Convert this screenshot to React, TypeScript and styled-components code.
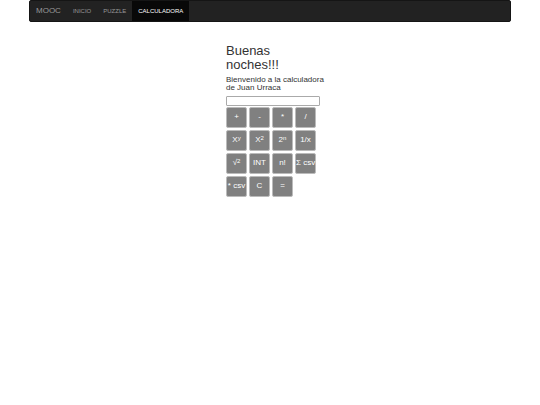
import React from "react";
import styled, { createGlobalStyle } from "styled-components";

const GlobalStyle = createGlobalStyle`
  *, *::before, *::after { box-sizing: border-box; }
  body {
    margin: 0;
    background: #fff;
    color: #333;
    font-family: "Liberation Sans", Arial, sans-serif;
  }
`;

const Navbar = styled.nav`
  display: flex;
  height: 22px;
  margin: 0 29px;
  overflow: hidden;
  background: #222;
  border: 1px solid #151515;
  border-radius: 2px;
`;

const Brand = styled.a`
  display: flex;
  align-items: center;
  padding: 0 6px;
  color: #999;
  font-size: 8px;
  line-height: 10px;
  text-decoration: none;
`;

const Menu = styled.ul`
  display: flex;
  margin: 0;
  padding: 0;
  list-style: none;
`;

const MenuLink = styled.a<{ $active?: boolean }>`
  display: flex;
  align-items: center;
  height: 100%;
  padding: 0 6px;
  background: ${({ $active }) => ($active ? "#080808" : "transparent")};
  color: ${({ $active }) => ($active ? "#fff" : "#999")};
  font-size: 6px;
  line-height: 10px;
  text-decoration: none;
`;

const Calculator = styled.main`
  width: 94px;
  margin: 22px 0 0 calc(50% - 44px);
`;

const Title = styled.h1`
  margin: 0 0 4px;
  font-size: 13px;
  font-weight: 400;
  line-height: 14px;
`;

const Welcome = styled.h2`
  margin: 0 0 4px;
  font-size: 8px;
  font-weight: 400;
  line-height: 8px;
  white-space: nowrap;
`;

const Display = styled.input`
  display: block;
  width: 100%;
  height: 10px;
  padding: 0 2px;
  border: 1px solid #aaa;
  border-radius: 1px;
  background: #fff;
  color: #333;
  font: 8px "Liberation Sans", Arial, sans-serif;
`;

const Keypad = styled.div`
  display: grid;
  grid-template-columns: repeat(4, 21px);
  gap: 2px;
  margin-top: 1px;
`;

const Key = styled.button`
  height: 21px;
  padding: 0 0 2px;
  border: 1px solid #bbb;
  border-radius: 2px;
  background: #808080;
  color: #fff;
  font: 8px/10px "Liberation Sans", Arial, sans-serif;
  white-space: nowrap;

  sup {
    font-size: 6px;
    line-height: 0;
    vertical-align: 2px;
  }
`;

const links = ["INICIO", "PUZZLE", "CALCULADORA"];

const keys: { name: string; label: React.ReactNode }[] = [
  { name: "sumar", label: "+" },
  { name: "restar", label: "-" },
  { name: "multiplicar", label: "*" },
  { name: "dividir", label: "/" },
  { name: "potencia", label: <>X<sup>y</sup></> },
  { name: "cuadrado", label: <>X<sup>2</sup></> },
  { name: "potencia de dos", label: <>2<sup>n</sup></> },
  { name: "inverso", label: "1/x" },
  { name: "raíz cuadrada", label: <>√<sup>2</sup></> },
  { name: "parte entera", label: "INT" },
  { name: "factorial", label: "n!" },
  { name: "sumatorio", label: "Σ csv" },
  { name: "productorio", label: "* csv" },
  { name: "borrar", label: "C" },
  { name: "igual", label: "=" },
];

export default function App() {
  return (
    <>
      <GlobalStyle />
      <Navbar>
        <Brand href="#">MOOC</Brand>
        <Menu>
          {links.map((link) => (
            <li key={link}>
              <MenuLink
                href="#"
                $active={link === "CALCULADORA"}
                aria-current={link === "CALCULADORA" ? "page" : undefined}
              >
                {link}
              </MenuLink>
            </li>
          ))}
        </Menu>
      </Navbar>
      <Calculator>
        <Title>Buenas noches!!!</Title>
        <Welcome>
          Bienvenido a la calculadora
          <br />
          de Juan Urraca
        </Welcome>
        <Display type="text" aria-label="Número" />
        <Keypad>
          {keys.map((key) => (
            <Key key={key.name} type="button" aria-label={key.name}>
              {key.label}
            </Key>
          ))}
        </Keypad>
      </Calculator>
    </>
  );
}
